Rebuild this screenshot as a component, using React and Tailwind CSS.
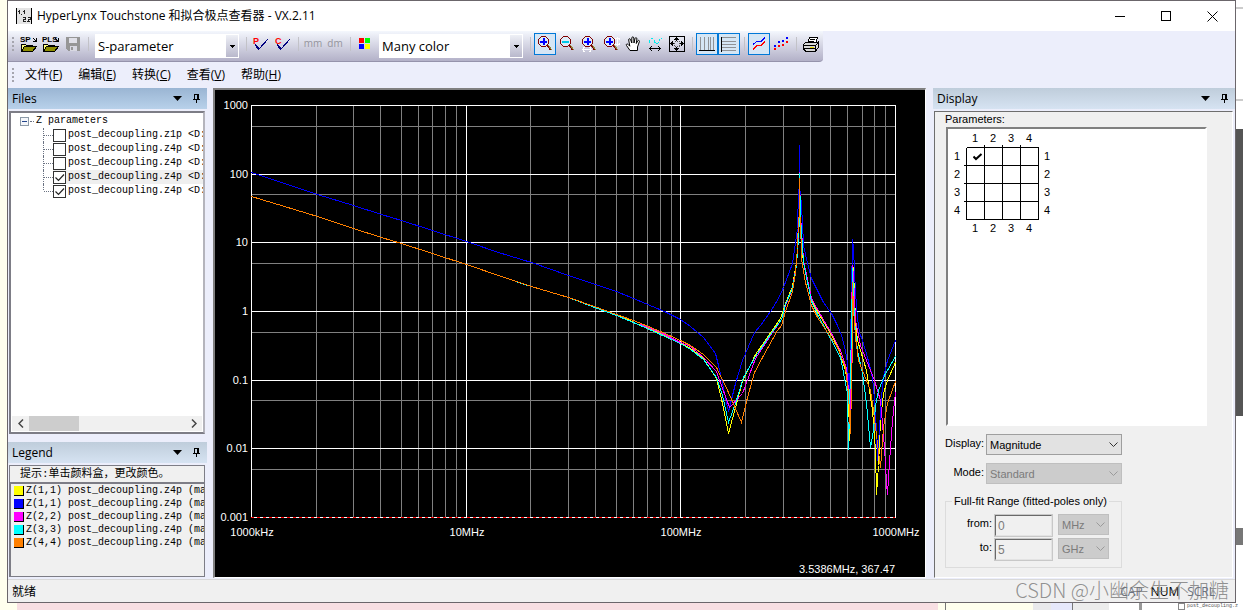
import { useState } from "react";


// ---------------- Data ----------------
const FILES = [
  { id: 1, name: "post_decoupling.z1p <D:", checked: false },
  { id: 2, name: "post_decoupling.z4p <D:", checked: false },
  { id: 3, name: "post_decoupling.z4p <D:", checked: false },
  { id: 4, name: "post_decoupling.z4p <D:", checked: true, active: true },
  { id: 5, name: "post_decoupling.z4p <D:", checked: true },
];

const LEGEND = [
  { port: "Z(1,1)", color: "bg-[#ffff00]" },
  { port: "Z(1,1)", color: "bg-[#0000ff]" },
  { port: "Z(2,2)", color: "bg-[#ff00ff]" },
  { port: "Z(3,3)", color: "bg-[#00ffff]" },
  { port: "Z(4,4)", color: "bg-[#ff8000]" },
];

const MENU = [
  ["文件", "F"],
  ["编辑", "E"],
  ["转换", "C"],
  ["查看", "V"],
  ["帮助", "H"],
];

const PORTS = [1, 2, 3, 4];

const CURVES = [
  {
    color: "#ffff00",
    points:
      "251,196 317,216 353,228 381,237 401,243 466,264 498,275 531,286 568,297 594,306 616,314 640,325 660,333 680,343 690,348 703,358 716,378 722,403 728,433 735,407 742,381 755,354 771,331 780,318 785,303 792,286 796,262 798,235 799,212 799,170 800,213 802,255 806,277 811,299 817,311 830,333 838,348 845,370 848,393 849,440 851,317 852,262 853,270 855,320 857,340 866,370 872,410 875,450 876,494 878,465 880,420 883,393 887,380 895,362",
  },
  {
    color: "#0000ff",
    points:
      "251,172 317,194 353,205 381,214 401,220 466,241 498,252 531,262 568,275 595,284 616,291 633,298 664,311 680,319 690,326 703,337 715,353 718,365 722,383 728,411 735,383 742,360 754,332 760,325 770,311 778,298 783,287 792,263 795,242 797,228 798,190 799,188 799,144 799,190 800,192 802,222 803,245 807,263 811,278 817,290 823,302 831,313 837,325 841,335 845,350 847,363 849,400 851,293 852,239 853,248 855,292 857,318 859,332 862,340 867,357 872,377 875,410 877,460 879,427 881,397 883,377 887,360 895,340",
  },
  {
    color: "#ff00ff",
    points:
      "640,324 660,332 680,342 690,346 703,357 716,371 722,388 729,407 742,393 755,358 772,332 781,319 785,305 792,288 796,264 798,237 799,214 799,172 800,215 803,260 811,298 817,309 831,333 840,350 846,368 848,390 850,433 851,320 852,265 853,276 855,320 860,345 874,380 880,400 884,447 886,482 887,494 889,462 892,420 895,392",
  },
  {
    color: "#00ffff",
    points:
      "515,281 524,284 531,286 568,297 594,307 616,315 640,325 660,334 680,343 690,349 703,359 716,377 722,395 728,422 735,403 743,377 755,356 772,331 781,319 785,304 792,288 796,265 798,238 799,216 799,173 800,217 803,262 811,301 817,314 828,334 840,357 847,393 848,449 851,330 852,268 854,320 857,350 862,373 866,403 870,447 873,430 875,405 878,390 884,375 895,356",
  },
  {
    color: "#ff8000",
    points:
      "251,196 317,216 353,228 381,237 401,243 466,264 498,275 531,286 568,297 594,306 616,314 633,320 660,331 680,340 690,345 703,354 716,367 728,392 741,422 747,397 754,372 762,357 777,330 781,325 785,311 792,291 795,272 797,248 798,218 799,216 799,177 799,216 800,218 801,258 805,282 811,305 817,317 827,332 837,347 845,367 848,393 850,433 852,340 852,282 853,308 855,337 858,360 870,390 873,410 877,443 880,467 883,427 887,403 895,381",
  },
];

const LEFT = 251;
const RIGHT = 895;
const TOP = 105;
const BOTTOM = 517;
const DECADE_X = (RIGHT - LEFT) / 3;
const DECADE_Y = (BOTTOM - TOP) / 6;

const X_LABELS = ["1000kHz", "10MHz", "100MHz", "1000MHz"];
const Y_LABELS = ["1000", "100", "10", "1", "0.1", "0.01", "0.001"];


// ---------------- Toolbar icons ----------------
function FileIcon({ text }) {
  return (
    <svg width="18" height="18" viewBox="0 0 18 18" shapeRendering="crispEdges">
      <text x="0" y="7" fontSize="8" fontWeight="700" fontFamily="Liberation Sans, sans-serif">{text}</text>
      <path d="M13 3l3 3M16.500 3v3.500h-3.500" stroke="#000" fill="none" />
      <path d="M1.500 16.500v-7h4l1 1h6v2" fill="#ffff80" stroke="#000" />
      <path d="M1.500 16.500l3-5h12l-4 5z" fill="#8c8c00" stroke="#000" />
    </svg>
  );
}

function SaveIcon() {
  return (
    <svg width="16" height="16" viewBox="0 0 16 16" shapeRendering="crispEdges">
      <path d="M1 1h14v14H3l-2-2z" fill="#969696" />
      <path d="M4 2h8v5H4z" fill="#e0e0e8" />
      <path d="M5 10h7v5H5z" fill="#d8d8e2" />
      <path d="M6 11h2v3H6z" fill="#969696" />
    </svg>
  );
}

function CheckLetter({ letter }) {
  return (
    <svg width="16" height="16" viewBox="0 0 16 16" shapeRendering="crispEdges">
      <text x="0" y="8" fontSize="9" fontWeight="700" fill="#f00" fontFamily="Liberation Sans, sans-serif">{letter}</text>
      <path d="M2 8l4 5L15 3" fill="none" stroke="#000080" />
      <path d="M2 8l4 4v3l-3-3z" fill="#000080" />
    </svg>
  );
}

function ColorIcon() {
  return (
    <svg width="12" height="12" viewBox="0 0 12 12" shapeRendering="crispEdges">
      <path d="M0 0h5v5H0z" fill="#f00" />
      <path d="M6 0h5v5H6z" fill="#0f0" />
      <path d="M0 6h5v5H0z" fill="#00f" />
      <path d="M6 6h5v5H6z" fill="#ff0" />
    </svg>
  );
}

function ZoomIcon({ kind }) {
  return (
    <svg width="18" height="18" viewBox="0 0 18 18" shapeRendering="crispEdges">
      <path d="M5.500 1.500h4l3 3v4l-3 3h-4l-3-3v-4z" fill="#dcecf8" stroke="#800000" />
      <path d="M4 6.500h7" stroke={kind === "out" ? "#00c8e8" : "#00f"} strokeWidth="2" />
      {kind !== "out" && <path d="M7.500 3v7" stroke="#00f" strokeWidth="2" />}
      <path d="M11 10l4 5" stroke="#800000" strokeWidth="2" />
      <path d="M12 10l4 5" stroke="#8c8c3c" strokeWidth="1" />
      {kind === "x" && <path d="M2 14.500h10M4.500 12l-2 2.500 2 2.500M9.500 12l2 2.500-2 2.500" stroke="#fff" fill="none" />}
      {kind === "y" && <path d="M15.500 2v9M13 4.500l2.500-2 2.500 2M13 8.500l2.500 2 2.500-2" stroke="#fff" fill="none" />}
    </svg>
  );
}

function HandIcon() {
  return (
    <svg width="16" height="16" viewBox="0 0 16 16">
      <path
        d="M5 14.500L1.500 9.500c-.8-1.500.8-2 1.700-1l1.600 1.700L3.700 4c-.2-1.500 1.500-1.700 1.900-.3L6.800 7V2c0-1.500 1.900-1.500 2 0l.2 5 1-4.500c.3-1.300 2-1 1.900.4L11.300 7.500l1.400-2.600c.7-1.100 2-.5 1.700.7L12.500 11v3.500z"
        fill="#fff"
        stroke="#000"
      />
    </svg>
  );
}

function WaveIcon() {
  return (
    <svg width="16" height="16" viewBox="0 0 16 16" shapeRendering="crispEdges">
      <path d="M2.500 6.500c0-3 1-4 2.500-4s2 2 3 4 4 1 4-1 1-3 3-3" fill="none" stroke="#0ee" strokeDasharray="3 1" />
      <path d="M2 12.500h12M5 10l-2.500 2.500L5 15M11 10l2.500 2.500L11 15" fill="none" stroke="#000" />
    </svg>
  );
}

function FitIcon() {
  return (
    <svg width="16" height="16" viewBox="0 0 16 16" shapeRendering="crispEdges">
      <path d="M.5.5h15v15H.5z" fill="none" stroke="#000" />
      <path d="M7.500 2v3M7.500 11v3M2 7.500h3M11 7.500h3" stroke="#000" />
      <path d="M5.500 4l2-2 2 2M5.500 12l2 2 2-2M4 5.500l-2 2 2 2M12 5.500l2 2-2 2" fill="none" stroke="#000" />
      <path d="M5.500 5.500h5v5h-5z" fill="none" stroke="#555" strokeDasharray="1 1" />
    </svg>
  );
}

function GridIcon({ rows }) {
  return (
    <svg width="16" height="16" viewBox="0 0 16 16" shapeRendering="crispEdges">
      {rows ? (
        <>
          <path d="M1 1.500h14M1 5.500h14M1 8.500h14M1 11.500h14M1 14.500h14" stroke="#8f9296" />
          <path d="M.5 1v15" stroke="#000" />
        </>
      ) : (
        <>
          <path d="M1.500 1v13M5.500 1v13M9.500 1v13M11.500 1v13M14.500 1v13" stroke="#8f9296" />
          <path d="M0 14.500h16" stroke="#000" />
        </>
      )}
    </svg>
  );
}

function LinesIcon() {
  return (
    <svg width="14" height="14" viewBox="0 0 14 14" shapeRendering="crispEdges">
      <path d="M1 7.500l4-3h4l4-4" fill="none" stroke="#00f" />
      <path d="M1 12.500l4-4h4l4-4" fill="none" stroke="#f00" />
    </svg>
  );
}

function DotsIcon() {
  return (
    <svg width="14" height="14" viewBox="0 0 14 14" shapeRendering="crispEdges">
      <path d="M0 8h2v2H0zM4 4h2v2H4zM8 3h2v2H8zM12 0h2v2h-2z" fill="#00f" />
      <path d="M0 11h2v2H0zM4 8h2v2H4zM8 7h2v2H8zM12 4h2v2h-2z" fill="#f00" />
    </svg>
  );
}

function PrintIcon() {
  return (
    <svg width="16" height="16" viewBox="0 0 16 16" shapeRendering="crispEdges">
      <path d="M4.500 7.500l2-6h8l-2 6z" fill="#fff" stroke="#000" />
      <path d="M7 3.500h5M6 5.500h5" stroke="#000" />
      <path d="M.5 8.500l2-2h12l1-1v6l-3 3.500h-10l-2-2z" fill="#d8d8d8" stroke="#000" />
      <path d="M1 9.500h11M1 12.500h11M12.500 9v6M13 9l2-2" stroke="#000" fill="none" />
      <path d="M7 11h4v1H7z" fill="#e8d800" />
    </svg>
  );
}


// ---------------- Small parts ----------------
function Tool({ label, on, disabled, children }) {
  return (
    <button
      aria-label={label}
      disabled={disabled}
      className={
        on
          ? "flex h-[22px] w-[22px] items-center justify-center border border-[#0078d7] bg-[#d5e6f5]"
          : "flex h-[22px] w-[22px] items-center justify-center"
      }
    >
      {children}
    </button>
  );
}

function Separator() {
  return (
    <div className="flex w-2 justify-center">
      <div className="h-3.5 w-px bg-[#c2c2c8]" />
    </div>
  );
}

function Grip() {
  return (
    <div className="flex w-2.5 flex-col items-center gap-0.5">
      {[0, 1, 2, 3].map((i) => (
        <div key={i} className="h-0.5 w-0.5 bg-[#a5a5ae]" />
      ))}
    </div>
  );
}

function ToolSelect({ label, value }) {
  return (
    <div className="relative mx-[3px] mt-1 h-6 w-36 shrink-0">
      <select
        aria-label={label}
        defaultValue={value}
        className="h-full w-full appearance-none bg-white pt-0.5 pl-[3px] text-[13px] outline-none"
      >
        <option>{value}</option>
      </select>
      <div className="pointer-events-none absolute inset-y-px right-px flex w-3 items-center justify-center bg-gradient-to-b from-[#eef0f6] to-[#b9b8cc]">
        <svg width="5" height="3" viewBox="0 0 5 3" shapeRendering="crispEdges">
          <path d="M0 0h5L2.500 3z" fill="#000" />
        </svg>
      </div>
    </div>
  );
}

function PanelHeader({ title, active }) {
  return (
    <div
      className={
        active
          ? "flex h-[21px] shrink-0 items-center bg-gradient-to-b from-[#9ab5d3] to-[#b8d1ea] pr-[5px] pl-1"
          : "flex h-[21px] shrink-0 items-center bg-gradient-to-b from-[#bfcddb] to-[#d6e3f2] pr-[5px] pl-1"
      }
    >
      <h2 className="flex-1 text-xs">{title}</h2>
      <button aria-label={`${title} menu`} className="flex w-3 justify-center">
        <svg width="9" height="5" viewBox="0 0 9 5">
          <path d="M0 0h9L4.500 5z" fill="#000" />
        </svg>
      </button>
      <button aria-label={`Pin ${title}`} className="ml-[7px] flex w-3 justify-center">
        <svg width="7" height="9" viewBox="0 0 7 9" shapeRendering="crispEdges">
          <path d="M1.500 5V.5h4V5M4.500 0v5M0 5.500h7M3.500 6v3" fill="none" stroke="#000" />
        </svg>
      </button>
    </div>
  );
}

function FormSelect({ id, value, disabled, className }) {
  return (
    <div className={`relative h-[21px] ${className}`}>
      <select
        id={id}
        aria-label={value}
        defaultValue={value}
        disabled={disabled}
        className={
          disabled
            ? "h-full w-full appearance-none border border-[#bfbfbf] bg-[#cccccc] pl-[3px] text-[#7b7b7b] opacity-100"
            : "h-full w-full appearance-none border border-[#9f9f9f] bg-[#e2e2e2] pl-[3px] text-black"
        }
      >
        <option>{value}</option>
      </select>
      <svg className="pointer-events-none absolute top-2 right-1" width="9" height="6" viewBox="0 0 9 6">
        <path d="M.5.5l4 4 4-4" fill="none" stroke={disabled ? "#9a9a9a" : "#333"} />
      </svg>
    </div>
  );
}


// ---------------- Tree of loaded files ----------------
function FilesTree() {

  const [files, setFiles] = useState(FILES);

  const toggle = (id) => {
    setFiles(files.map((f) => (f.id === id ? { ...f, checked: !f.checked } : f)));
  };

  return (
    <div className="flex-1 overflow-hidden pt-px pl-[9px] font-['Liberation_Mono','Noto_Sans_CJK_SC',monospace] text-[10px]">

      <div className="flex h-3.5 items-center">
        <button aria-label="Collapse" className="flex h-[9px] w-[9px] items-center justify-center border border-[#8c9aa8] bg-[#f4f6fa]">
          <span className="h-px w-[5px] bg-[#24468c]" />
        </button>
        <div className="mr-0.5 ml-px w-1 border-t border-dotted border-gray-500" />
        Z parameters
      </div>

      <ul className="ml-[23px]">
        {files.map((f, i) => (
          <li key={f.id} className="flex h-3.5 items-center">
            <div className={i === files.length - 1 ? "h-1.5 shrink-0 self-start border-l border-dotted border-gray-500" : "h-full shrink-0 border-l border-dotted border-gray-500"} />
            <div className="w-[9px] shrink-0 border-t border-dotted border-gray-500" />
            <label className={f.active ? "flex h-full flex-1 items-center bg-[#efefef] whitespace-pre" : "flex h-full flex-1 items-center whitespace-pre"}>
              <span className="relative mr-0.5 flex h-[13px] w-[13px] shrink-0">
                <input
                  type="checkbox"
                  checked={f.checked}
                  onChange={() => toggle(f.id)}
                  className="h-full w-full appearance-none border border-[#333] bg-white"
                />
                {f.checked && (
                  <svg className="pointer-events-none absolute inset-0" width="13" height="13" viewBox="0 0 13 13">
                    <path d="M2.500 6.500l3 3 5.500-6" fill="none" stroke="#222" strokeWidth="1.200" />
                  </svg>
                )}
              </span>
              {f.name}
            </label>
          </li>
        ))}
      </ul>

    </div>
  );
}


// ---------------- Impedance plot ----------------
function Plot() {

  const minorX = [];
  for (let d = 0; d < 3; d++) {
    for (let n = 2; n < 10; n++) {
      minorX.push(Math.round(LEFT + DECADE_X * (d + Math.log10(n))));
    }
  }

  return (
    <svg
      className="h-full w-full"
      viewBox="215 90 710 487"
      fontFamily="Liberation Sans, sans-serif"
      fontSize="11"
      fill="#fff"
    >
      <g shapeRendering="crispEdges" fill="none" strokeWidth="1">

        {minorX.map((x) => (
          <path key={x} d={`M${x + 0.5} ${TOP}V${BOTTOM}`} stroke="#808080" />
        ))}

        {Y_LABELS.slice(1).map((label, i) => (
          <path
            key={label}
            d={`M${LEFT} ${Math.round(TOP + DECADE_Y * (i + 0.301)) + 0.5}H${RIGHT}`}
            stroke="#808080"
          />
        ))}

        {X_LABELS.map((label, i) => (
          <path key={label} d={`M${Math.round(LEFT + DECADE_X * i) + 0.5} ${TOP}V${BOTTOM}`} stroke="#fff" />
        ))}

        {Y_LABELS.map((label, i) => (
          <path key={label} d={`M${LEFT} ${Math.round(TOP + DECADE_Y * i) + 0.5}H${RIGHT + 1}`} stroke="#fff" />
        ))}

        <path d={`M${LEFT} ${BOTTOM + 0.5}H${RIGHT}`} stroke="#f00" strokeDasharray="3 3" />

        {CURVES.map((c) => (
          <polyline key={c.color} points={c.points} stroke={c.color} transform="translate(.5 .5)" />
        ))}

      </g>

      {Y_LABELS.map((label, i) => (
        <text key={label} x={LEFT - 3} y={Math.round(TOP + DECADE_Y * i) + 4} textAnchor="end">{label}</text>
      ))}
      {X_LABELS.map((label, i) => (
        <text key={label} x={Math.round(LEFT + DECADE_X * i) + 1} y={BOTTOM + 19} textAnchor="middle">{label}</text>
      ))}
      <text x={RIGHT} y="573" textAnchor="end">3.5386MHz, 367.47</text>
    </svg>
  );
}


// ---------------- Port matrix ----------------
function PortMatrix() {

  const [picked, setPicked] = useState("1-1");

  return (
    <table className="table-fixed border-separate border-spacing-0 text-center text-[11px] leading-none">
      <thead>
        <tr className="h-[19px]">
          <th className="w-[19px] p-0" />
          {PORTS.map((p) => (
            <th key={p} className="relative w-[18px] border-b border-black p-0 pr-0.5 font-normal">
              {p}
              {p < 4 && <span className="absolute right-0 bottom-0 h-0.5 w-px bg-black" />}
            </th>
          ))}
          <th className="w-[18px] p-0" />
        </tr>
      </thead>
      <tbody>
        {PORTS.map((row) => (
          <tr key={row} className="h-[18px]">
            <th className="relative border-r border-black p-0 pb-0.5 font-normal">
              {row}
              {row < 4 && <span className="absolute right-0 bottom-0 h-px w-0.5 bg-black" />}
            </th>
            {PORTS.map((col) => {
              const id = `${row}-${col}`;
              return (
                <td key={id} className="relative border-r border-b border-black p-0">
                  <input
                    type="checkbox"
                    aria-label={`Z(${row},${col})`}
                    checked={picked === id}
                    onChange={() => setPicked(id)}
                    className="block h-[17px] w-[17px] appearance-none"
                  />
                  {picked === id && (
                    <svg className="pointer-events-none absolute top-1 left-1.5" width="10" height="10" viewBox="0 0 10 10">
                      <path d="M.5 4.500l2.500 2.500L8.500 2" fill="none" stroke="#000" strokeWidth="2" />
                    </svg>
                  )}
                </td>
              );
            })}
            <th className="p-0 pr-0.5 pb-0.5 font-normal">{row}</th>
          </tr>
        ))}
        <tr className="h-[18px]">
          <th className="p-0" />
          {PORTS.map((p) => (
            <th key={p} className="p-0 pr-0.5 pb-0.5 font-normal">{p}</th>
          ))}
          <th className="p-0" />
        </tr>
      </tbody>
    </table>
  );
}


function App() {

  return (

    <div className="flex h-screen flex-col overflow-hidden bg-[#ffffee] font-['Open_Sans','Noto_Sans_CJK_SC',sans-serif] text-xs text-black">

      <div className="flex min-h-0 flex-1">

        {/* WINDOW */}
        <div className="ml-[7px] flex min-w-0 flex-1 flex-col border border-[#6b666b] bg-[#eceefb]">

          {/* TITLE BAR */}
          <header className="flex h-[30px] shrink-0 items-center bg-white pl-2">
            <svg width="16" height="16" viewBox="0 0 16 16" shapeRendering="crispEdges">
              <path d="M0 0h16v16H0z" fill="#e4e4e4" />
              <path d="M.5 0v16M15.500 0v16" stroke="#000" />
              <path d="M3.500 2v4M2 3.500h1M5 6.500h1M8.500 2v4M7 3.500h1M7 9.500h2v2H7v2h3M11 13.500h1M12 9.500h2v2h-2v2h2" stroke="#222" fill="none" />
            </svg>
            <h1 className="flex-1 pl-[5px] text-xs">HyperLynx Touchstone 和拟合极点查看器 - VX.2.11</h1>
            <button aria-label="Minimize" className="flex h-full w-[46px] items-center justify-center">
              <svg width="11" height="11" viewBox="0 0 11 11" shapeRendering="crispEdges"><path d="M0 5.500h10" stroke="#000" /></svg>
            </button>
            <button aria-label="Maximize" className="flex h-full w-[46px] items-center justify-center">
              <svg width="11" height="11" viewBox="0 0 11 11" shapeRendering="crispEdges"><path d="M.5.5h9v9h-9z" fill="none" stroke="#000" /></svg>
            </button>
            <button aria-label="Close" className="flex h-full w-[46px] items-center justify-center">
              <svg width="11" height="11" viewBox="0 0 11 11"><path d="M.5.5l10 10M10.500.5l-10 10" stroke="#000" /></svg>
            </button>
          </header>

          {/* TOOLBAR */}
          <div className="flex h-[31px] shrink-0">
            <div className="flex items-center rounded-br-sm border-b border-[#9593ab] bg-gradient-to-b from-[#f4f7fd] to-[#b3b1c8] pr-px pb-1">
              <Grip />
              <Tool label="Open S-parameter file"><FileIcon text="SP" /></Tool>
              <Tool label="Open PLS file"><FileIcon text="PLS" /></Tool>
              <Tool label="Save" disabled><SaveIcon /></Tool>
              <Separator />
              <ToolSelect label="Parameter type" value="S-parameter" />
              <Separator />
              <Tool label="Check passivity"><CheckLetter letter="P" /></Tool>
              <Tool label="Check causality"><CheckLetter letter="C" /></Tool>
              <Separator />
              <button disabled className="w-[22px] text-center text-[10px] text-[#94949c]">mm</button>
              <button disabled className="w-[22px] text-center text-[10px] text-[#94949c]">dm</button>
              <Separator />
              <Tool label="Colors"><ColorIcon /></Tool>
              <ToolSelect label="Color mode" value="Many color" />
              <Separator />
              <Tool label="Zoom in" on><ZoomIcon kind="in" /></Tool>
              <Tool label="Zoom out"><ZoomIcon kind="out" /></Tool>
              <Tool label="Zoom horizontally"><ZoomIcon kind="x" /></Tool>
              <Tool label="Zoom vertically"><ZoomIcon kind="y" /></Tool>
              <Tool label="Pan"><HandIcon /></Tool>
              <Tool label="Fit width"><WaveIcon /></Tool>
              <Tool label="Fit all"><FitIcon /></Tool>
              <Separator />
              <Tool label="Logarithmic X" on><GridIcon /></Tool>
              <Tool label="Logarithmic Y" on><GridIcon rows /></Tool>
              <Separator />
              <Tool label="Lines" on><LinesIcon /></Tool>
              <Tool label="Points"><DotsIcon /></Tool>
              <Separator />
              <Tool label="Print"><PrintIcon /></Tool>
            </div>
          </div>

          {/* MENU */}
          <nav className="flex h-[26px] shrink-0 items-center">
            <Grip />
            <div className="flex gap-4 pl-[7px]">
              {MENU.map(([text, key]) => (
                <button key={key}>
                  {text}(<span className="underline">{key}</span>)
                </button>
              ))}
            </div>
          </nav>

          <div className="flex min-h-0 flex-1">

            {/* LEFT COLUMN */}
            <aside className="mr-1.5 flex w-[199px] shrink-0 flex-col">

              <PanelHeader title="Files" active />

              <section className="mt-0.5 mr-0.5 ml-px flex flex-1 flex-col border-2 border-[#7d7d86] border-r-[#b4b4bc] bg-white">
                <FilesTree />
                <div className="mx-px mb-px flex h-[15px] items-center bg-[#f0f0f0]">
                  <button aria-label="Scroll left" className="flex w-[17px] justify-center">
                    <svg width="6" height="9" viewBox="0 0 6 9"><path d="M5 .5l-4 4 4 4" fill="none" stroke="#444" strokeWidth="1.500" /></svg>
                  </button>
                  <div className="h-full w-[50px] bg-[#cdcdcd]" />
                  <button aria-label="Scroll right" className="ml-auto flex w-[17px] justify-center">
                    <svg width="6" height="9" viewBox="0 0 6 9"><path d="M1 .5l4 4-4 4" fill="none" stroke="#444" strokeWidth="1.500" /></svg>
                  </button>
                </div>
              </section>

              <div className="mt-2 flex flex-col">
                <PanelHeader title="Legend" />
              </div>

              <section className="mt-0.5 mr-0.5 mb-0.5 ml-px flex h-28 flex-col border border-[#7d7d86] bg-[#f0f0f0] font-['Liberation_Mono','Noto_Sans_CJK_SC',monospace]">
                <p className="h-4 overflow-hidden pl-2.5 text-[11px] leading-4 whitespace-nowrap">提示:单击颜料盒，更改颜色。</p>
                <ul className="flex-1 overflow-hidden border-t-2 border-l border-[#7d7d86] pl-[3px]">
                  {LEGEND.map((l, i) => (
                    <li key={i} className="flex h-[13px] items-center text-[10px] whitespace-pre">
                      <button aria-label={`Color ${i + 1}`} className={`mr-0.5 h-2.5 w-2.5 shrink-0 border-r border-b border-black ${l.color}`} />
                      {l.port} post_decoupling.z4p (ma
                    </li>
                  ))}
                </ul>
              </section>

            </aside>


            {/* CHART */}
            <main className="mb-px min-w-0 flex-1 border-t-2 border-r border-b border-l-2 border-t-[#808080] border-r-white border-b-white border-l-[#808080] bg-black">
              <Plot />
            </main>


            {/* RIGHT COLUMN */}
            <aside className="ml-[7px] flex w-[302px] shrink-0 flex-col">

              <PanelHeader title="Display" />

              <section className="mt-0.5 mr-0.5 mb-px ml-px flex flex-1 flex-col border border-t-[#6e6e6e] border-r-white border-b-white border-l-[#6e6e6e] bg-[#f0f0f0] pl-2.5 font-['Liberation_Sans','Noto_Sans_CJK_SC',sans-serif] text-[11px] leading-[14px]">

                <p className="h-[15px]">Parameters:</p>

                <div className="ml-px w-[261px] flex-1 border-2 border-t-[#808080] border-r-white border-b-white border-l-[#808080] bg-white">
                  <PortMatrix />
                </div>

                <div className="mt-2 flex">
                  <label htmlFor="display" className="mt-0.5 w-[41px] pr-0.5 text-right">Display:</label>
                  <FormSelect id="display" value="Magnitude" className="w-34" />
                </div>

                <div className="mt-2 flex">
                  <label htmlFor="mode" className="mt-0.5 w-[41px] pr-0.5 text-right">Mode:</label>
                  <FormSelect id="mode" value="Standard" disabled className="w-34" />
                </div>

                <fieldset className="mt-[11px] mb-[9px] w-[177px] border border-[#dcdcdc] pb-[5px]">
                  <legend className="ml-1.5 px-0.5 leading-3">Full-fit Range (fitted-poles only)</legend>
                  {[["from:", "0", "MHz"], ["to:", "5", "GHz"]].map(([label, value, unit]) => (
                    <div key={label} className="flex h-6 first-of-type:mt-[7px]">
                      <label htmlFor={label} className="mt-0.5 w-[49px] pr-[3px] text-right">{label}</label>
                      <input
                        id={label}
                        defaultValue={value}
                        disabled
                        className="mt-px h-[21px] w-[57px] border border-t-[#696969] border-r-[#e3e3e3] border-b-[#e3e3e3] border-l-[#696969] bg-[#f0f0f0] pl-0.5 text-xs text-[#7b7b7b] outline-1 outline-[#c8c8c8]"
                      />
                      <FormSelect value={unit} disabled className="ml-1.5 w-[51px]" />
                    </div>
                  ))}
                </fieldset>

              </section>

            </aside>

          </div>

          {/* STATUS BAR */}
          <footer className="relative flex h-[23px] shrink-0 items-center border-t border-[#d9d9d9] bg-[#f0f0f0] pt-0.5 pr-5 pl-1">
            <span className="flex-1">就绪</span>
            <div className="flex gap-2">
              <span className="text-gray-500">CAP</span>
              <span>NUM</span>
              <span className="text-gray-500">SCRL</span>
            </div>
            <span className="absolute right-1.5 bottom-0 font-['Noto_Sans_CJK_SC',sans-serif] text-[20px] leading-6 font-light whitespace-nowrap text-[#777]/80">CSDN @小幽余生不加糖</span>
          </footer>

        </div>

        {/* WINDOWS BEHIND, RIGHT EDGE */}
        <div className="flex w-[7px] shrink-0 flex-col bg-white">
          <div className="h-[9px] border-b-2 border-[#ccc]" />
          <div className="h-[92px] border-b-2 border-[#ccc]" />
          <div className="h-7" />
          <div className="h-[287px] bg-[#555]" />
          <div className="h-28" />
          <div className="h-[17px] bg-[#777]" />
        </div>

      </div>

      {/* WINDOWS BEHIND, BOTTOM EDGE */}
      <div className="flex h-[7px] shrink-0 overflow-hidden">
        <div className="ml-[17px] flex-1 bg-[#f8dfe3]" />
        <div className="w-2 border-r border-[#777]" />
        <div className="w-[87px]" />
        <div className="w-[18px] bg-[#e9e9ec]" />
        <div className="w-[22px] border-r border-[#777] bg-[#e6e8fb]" />
        <div className="w-9 bg-[#ececec]" />
        <div className="flex w-[134px] items-center bg-white">
          <div className="ml-[30px] h-full w-[3px] bg-[#999]" />
          <div className="ml-9 h-[7px] w-[7px] border border-[#888]" />
          <span className="ml-0.5 font-['Liberation_Mono',monospace] text-[5px] leading-[7px] whitespace-nowrap text-[#555]">post_decoupling.z</span>
        </div>
      </div>

    </div>

  );

}

export default App;
